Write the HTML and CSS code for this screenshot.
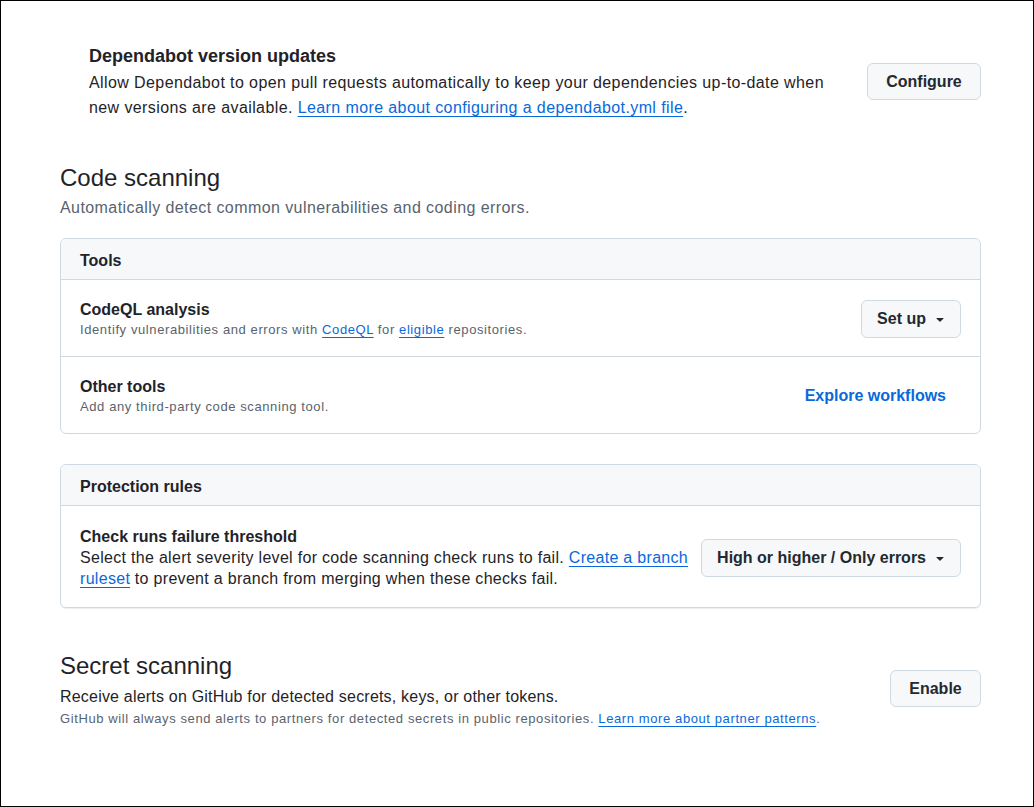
FILE: index.html
```html
<!DOCTYPE html>
<html lang="en">
<head>
<meta charset="utf-8">
<title>Code security</title>
<link rel="stylesheet" href="styles.css">
</head>
<body>
<div class="frame">
  <div class="dependabot">
    <div class="dep-text">
      <div class="dep-title">Dependabot version updates</div>
      <div class="dep-desc">Allow Dependabot to open pull requests automatically to keep your dependencies up-to-date when new versions are available. <a href="#" class="link">Learn more about configuring a dependabot.yml file</a>.</div>
    </div>
    <button class="btn btn-configure">Configure</button>
  </div>

  <section class="section">
    <h2 class="section-title">Code scanning</h2>
    <p class="section-sub">Automatically detect common vulnerabilities and coding errors.</p>
  </section>

  <div class="box">
    <div class="box-header">Tools</div>
    <div class="box-row">
      <div class="row-text">
        <div class="item-title">CodeQL analysis</div>
        <div class="small-muted">Identify vulnerabilities and errors with <a href="#" class="link">CodeQL</a> for <a href="#" class="link">eligible</a> repositories.</div>
      </div>
      <button class="btn btn-menu">Set up <svg class="caret" viewBox="0 0 16 16" width="16" height="16"><path d="m4.427 7.427 3.396 3.396a.25.25 0 0 0 .354 0l3.396-3.396A.25.25 0 0 0 11.396 7H4.604a.25.25 0 0 0-.177.427Z"/></svg></button>
    </div>
    <div class="box-row">
      <div class="row-text">
        <div class="item-title">Other tools</div>
        <div class="small-muted">Add any third-party code scanning tool.</div>
      </div>
      <a href="#" class="btn-invisible">Explore workflows</a>
    </div>
  </div>

  <div class="box box-protection">
    <div class="box-header">Protection rules</div>
    <div class="box-row box-row-tall">
      <div class="row-text">
        <div class="item-title lh21">Check runs failure threshold</div>
        <div class="prot-desc">Select the alert severity level for code scanning check runs to fail. <a href="#" class="link">Create a branch<br>ruleset</a> to prevent a branch from merging when these checks fail.</div>
      </div>
      <button class="btn btn-menu">High or higher / Only errors <svg class="caret" viewBox="0 0 16 16" width="16" height="16"><path d="m4.427 7.427 3.396 3.396a.25.25 0 0 0 .354 0l3.396-3.396A.25.25 0 0 0 11.396 7H4.604a.25.25 0 0 0-.177.427Z"/></svg></button>
    </div>
  </div>

  <div class="secret">
    <div class="secret-text">
      <h2 class="section-title">Secret scanning</h2>
      <div class="secret-desc">Receive alerts on GitHub for detected secrets, keys, or other tokens.</div>
      <div class="small-muted">GitHub will always send alerts to partners for detected secrets in public repositories. <a href="#" class="link">Learn more about partner patterns</a>.</div>
    </div>
    <button class="btn btn-enable">Enable</button>
  </div>
</div>
</body>
</html>
```

FILE: styles.css
```css
* { box-sizing: border-box; }

html, body {
  margin: 0;
  padding: 0;
  background: #ffffff;
}

body {
  font-family: "Liberation Sans", Arial, sans-serif;
  font-size: 16px;
  color: #1f2328;
}

.frame {
  width: 1034px;
  height: 807px;
  border: 1px solid #000000;
  padding: 0 0 0 59px;
  overflow: hidden;
}

.link {
  color: #0969da;
  text-decoration: underline;
  text-underline-offset: 3px;
}

.item-title {
  font-weight: 700;
  font-size: 16px;
  line-height: 22px;
}

.lh21 { line-height: 21px; }

.dependabot {
  width: 921px;
  margin-top: 42px;
  padding-left: 29px;
  display: flex;
  align-items: center;
  justify-content: space-between;
}

.dep-title {
  font-size: 18px;
  font-weight: 700;
  line-height: 27px;
}

.dep-desc {
  line-height: 25px;
  max-width: 760px;
  letter-spacing: 0.4px;
}

.btn {
  font-family: inherit;
  font-size: 16px;
  font-weight: 700;
  color: #25292e;
  background: #f6f8fa;
  border: 1px solid #d1d9e0;
  border-radius: 6px;
  height: 37px;
  padding: 0 12px 0 15px;
  display: inline-flex;
  align-items: center;
  gap: 6px;
  cursor: pointer;
  flex-shrink: 0;
}

.btn-configure {
  width: 114px;
  padding: 0;
  justify-content: center;
}

.btn-menu {
  height: 38px;
}

.caret {
  fill: #25292e;
}

.btn-enable {
  width: 91px;
  padding: 0;
  justify-content: center;
}

.btn-invisible {
  color: #0969da;
  font-weight: 700;
  text-decoration: none;
  padding: 0 15px;
  line-height: 38px;
  flex-shrink: 0;
}

.section {
  margin-top: 40px;
}

.section-title {
  margin: 0;
  font-size: 24px;
  font-weight: 400;
  line-height: 36px;
  color: #1f2328;
}

.section-sub {
  margin: 0;
  line-height: 24px;
  color: #59636e;
  letter-spacing: 0.42px;
}

.box {
  width: 921px;
  margin-top: 18px;
  border: 1px solid #d1d9e0;
  border-radius: 6px;
  overflow: hidden;
}

.box-protection {
  margin-top: 30px;
  box-shadow: 0 1px 0 rgba(31, 35, 40, 0.08);
}

.box-header {
  background: #f6f8fa;
  border-bottom: 1px solid #d1d9e0;
  padding: 10px 19px 6px;
  line-height: 24px;
  font-weight: 700;
}

.box-row {
  display: flex;
  align-items: center;
  justify-content: space-between;
  padding: 19px 19px 17px;
  border-top: 1px solid #d1d9e0;
}

.box-header + .box-row {
  border-top: 0;
}

.box-row-tall {
  padding: 20px 19px 18px;
}

.row-text {
  flex: 1;
  min-width: 0;
}

.small-muted {
  font-size: 13px;
  line-height: 18px;
  color: #59636e;
  letter-spacing: 0.6px;
}

.secret .small-muted {
  line-height: 20px;
}

.prot-desc {
  line-height: 21px;
  margin-right: 16px;
  letter-spacing: 0.3px;
  white-space: nowrap;
}

.secret {
  width: 921px;
  margin-top: 40px;
  display: flex;
  align-items: center;
  justify-content: space-between;
}

.secret-desc {
  line-height: 25px;
  letter-spacing: 0.2px;
}
```
